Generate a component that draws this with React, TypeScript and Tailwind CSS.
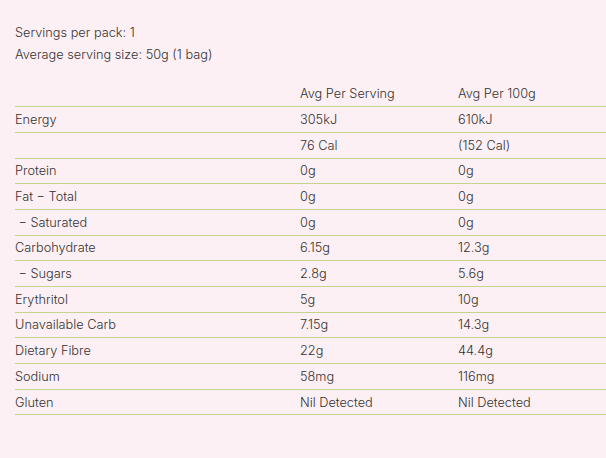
const rows = [
  ["Energy", "305kJ", "610kJ"],
  ["", "76 Cal", "(152 Cal)"],
  ["Protein", "0g", "0g"],
  ["Fat − Total", "0g", "0g"],
  [" − Saturated", "0g", "0g"],
  ["Carbohydrate", "6.15g", "12.3g"],
  [" − Sugars", "2.8g", "5.6g"],
  ["Erythritol", "5g", "10g"],
  ["Unavailable Carb", "7.15g", "14.3g"],
  ["Dietary Fibre", "22g", "44.4g"],
  ["Sodium", "58mg", "116mg"],
  ["Gluten", "Nil Detected", "Nil Detected"],
];

export default function App() {
  return (
    <div
      className="w-[606px] h-[458px] overflow-hidden bg-[#fdf0f4] text-[#333] text-[12.75px] font-light pl-[15px] pt-[22px]"
      style={{ fontFamily: "Inter, 'Noto Sans', sans-serif" }}
    >
      <p className="leading-[22px]">Servings per pack: 1</p>
      <p className="leading-[22px]">Average serving size: 50g (1 bag)</p>
      <table className="mt-[15px] w-[620px] border-collapse">
        <thead>
          <tr className="border-b border-[#c3d58c]">
            <th className="w-[285px] h-[25.7px] p-0 text-left font-light"></th>
            <th className="w-[158px] p-0 text-left font-light">Avg Per Serving</th>
            <th className="p-0 text-left font-light">Avg Per 100g</th>
          </tr>
        </thead>
        <tbody>
          {rows.map((r, i) => (
            <tr key={i} className="border-b border-[#c3d58c]">
              <td className="h-[25.7px] p-0 whitespace-pre">{r[0]}</td>
              <td className="p-0">{r[1]}</td>
              <td className="p-0">{r[2]}</td>
            </tr>
          ))}
        </tbody>
      </table>
    </div>
  );
}
